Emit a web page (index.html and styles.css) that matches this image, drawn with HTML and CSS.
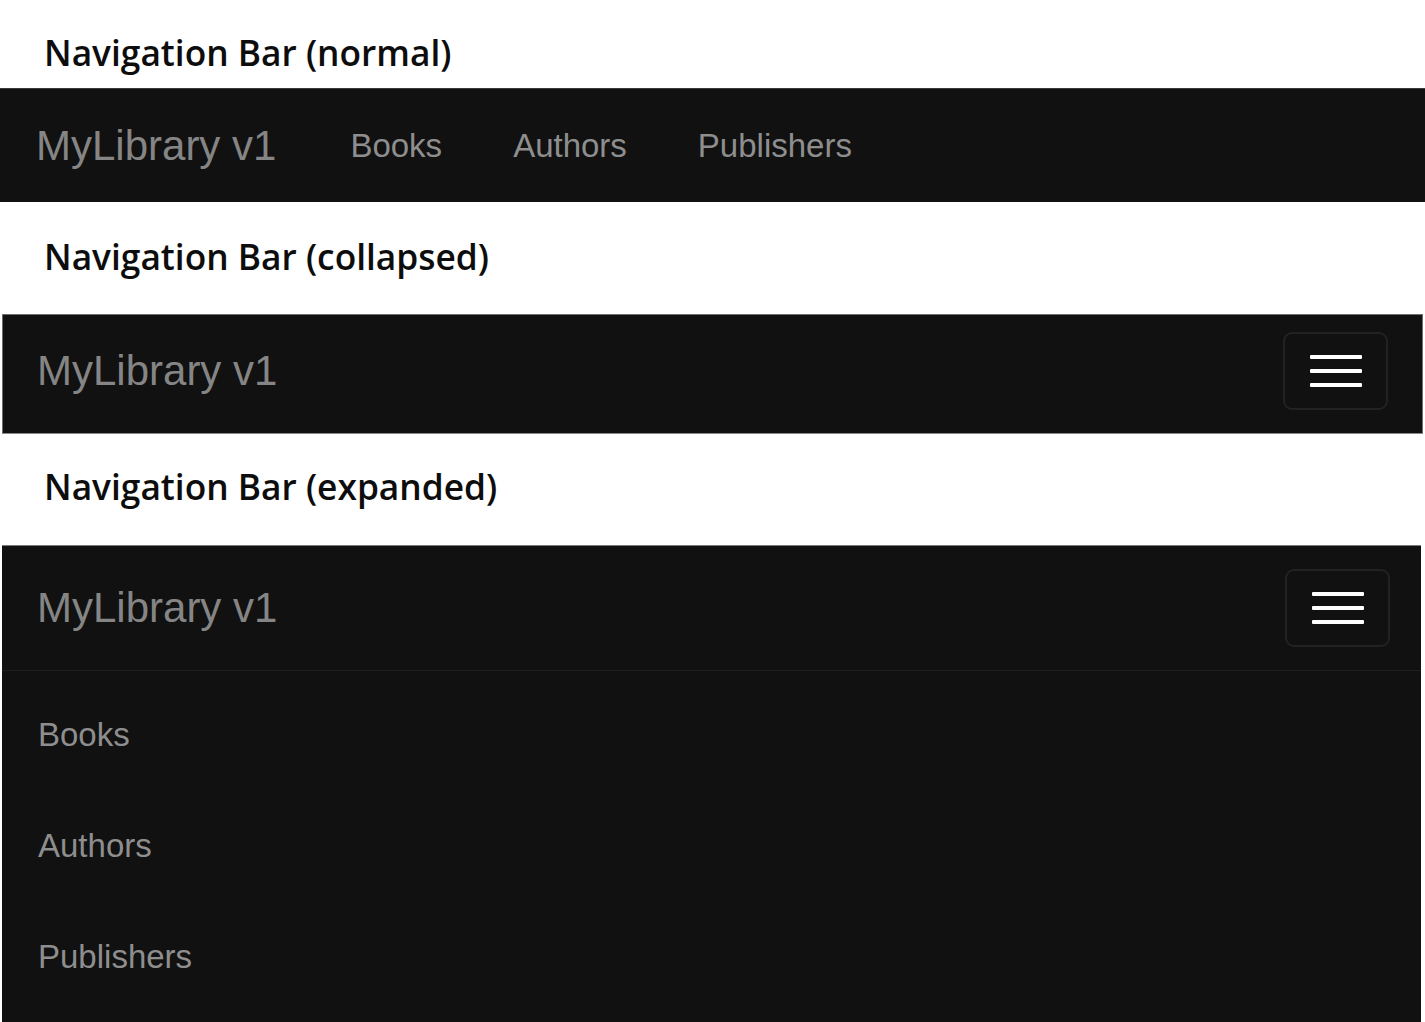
FILE: index.html
```html
<!DOCTYPE html>
<html lang="en">
<head>
<meta charset="utf-8">
<title>Navigation Bar states</title>
<link rel="stylesheet" href="styles.css">
</head>
<body>
  <div class="caption caption-first">Navigation Bar (normal)</div>
  <nav class="navbar navbar-normal">
    <a class="brand" href="#">MyLibrary v1</a>
    <ul class="nav-links">
      <li><a href="#">Books</a></li>
      <li><a href="#">Authors</a></li>
      <li><a href="#">Publishers</a></li>
    </ul>
  </nav>

  <div class="caption caption-second">Navigation Bar (collapsed)</div>
  <nav class="navbar navbar-collapsed">
    <div class="navbar-header">
      <a class="brand" href="#">MyLibrary v1</a>
      <button class="toggle" type="button" aria-label="Toggle navigation">
        <span class="icon-bar"></span>
        <span class="icon-bar"></span>
        <span class="icon-bar"></span>
      </button>
    </div>
  </nav>

  <div class="caption caption-third">Navigation Bar (expanded)</div>
  <nav class="navbar navbar-expanded">
    <div class="navbar-header header-expanded">
      <a class="brand" href="#">MyLibrary v1</a>
      <button class="toggle" type="button" aria-label="Toggle navigation">
        <span class="icon-bar"></span>
        <span class="icon-bar"></span>
        <span class="icon-bar"></span>
      </button>
    </div>
    <ul class="menu">
      <li><a href="#">Books</a></li>
      <li><a href="#">Authors</a></li>
      <li><a href="#">Publishers</a></li>
    </ul>
  </nav>
</body>
</html>
```

FILE: styles.css
```css
html, body {
  margin: 0;
  padding: 0;
  background: #ffffff;
  overflow: hidden;
}

body {
  width: 1425px;
  height: 1022px;
}

.caption {
  box-sizing: border-box;
  padding-left: 44px;
  font-family: "Open Sans", "Noto Sans", sans-serif;
  font-weight: 600;
  font-size: 35.3px;
  line-height: 37px;
  color: #0d0d0d;
}

.caption-first {
  height: 88px;
  padding-top: 34px;
}

.caption-second {
  height: 112px;
  padding-top: 36px;
}

.caption-third {
  height: 111px;
  padding-top: 34px;
}

.navbar {
  box-sizing: border-box;
  background: #111111;
  font-family: "Liberation Sans", Arial, sans-serif;
}

.navbar a {
  text-decoration: none;
}

.brand {
  font-size: 42px;
  line-height: 48px;
  color: #858585;
}

.navbar-normal {
  height: 114px;
  border-top: 1px solid #3a3a3a;
  display: flex;
  align-items: center;
  padding-left: 36px;
}

.nav-links {
  list-style: none;
  margin: 0 0 0 74px;
  padding: 0;
  display: flex;
  gap: 71px;
}

.nav-links a,
.menu a {
  font-size: 33px;
  line-height: 40px;
  color: #8e8e8e;
}

.navbar-collapsed {
  margin: 0 2px;
  height: 120px;
  border: 1px solid #6e6e6e;
  border-bottom-color: #8a8a8a;
}

.navbar-header {
  display: flex;
  align-items: center;
  justify-content: space-between;
  padding: 0 34px 0 34px;
  height: 112px;
}

.toggle {
  box-sizing: border-box;
  width: 105px;
  height: 78px;
  background: transparent;
  border: 2px solid #222222;
  border-radius: 9px;
  display: flex;
  flex-direction: column;
  align-items: center;
  justify-content: center;
  gap: 9.5px;
  padding: 0;
}

.icon-bar {
  display: block;
  width: 52px;
  height: 4.5px;
  background: #ffffff;
  border-radius: 1px;
}

.navbar-expanded {
  margin: 0 4px 0 2px;
  height: 520px;
  border-top: 1px solid #7a7a7a;
}

.header-expanded {
  height: 124px;
  padding: 0 31px 0 35px;
  border-bottom: 1px solid #1f1f1f;
}

.menu {
  list-style: none;
  margin: 0;
  padding: 8px 0 20px 36px;
}

.menu li {
  height: 111px;
  display: flex;
  align-items: center;
}
```
